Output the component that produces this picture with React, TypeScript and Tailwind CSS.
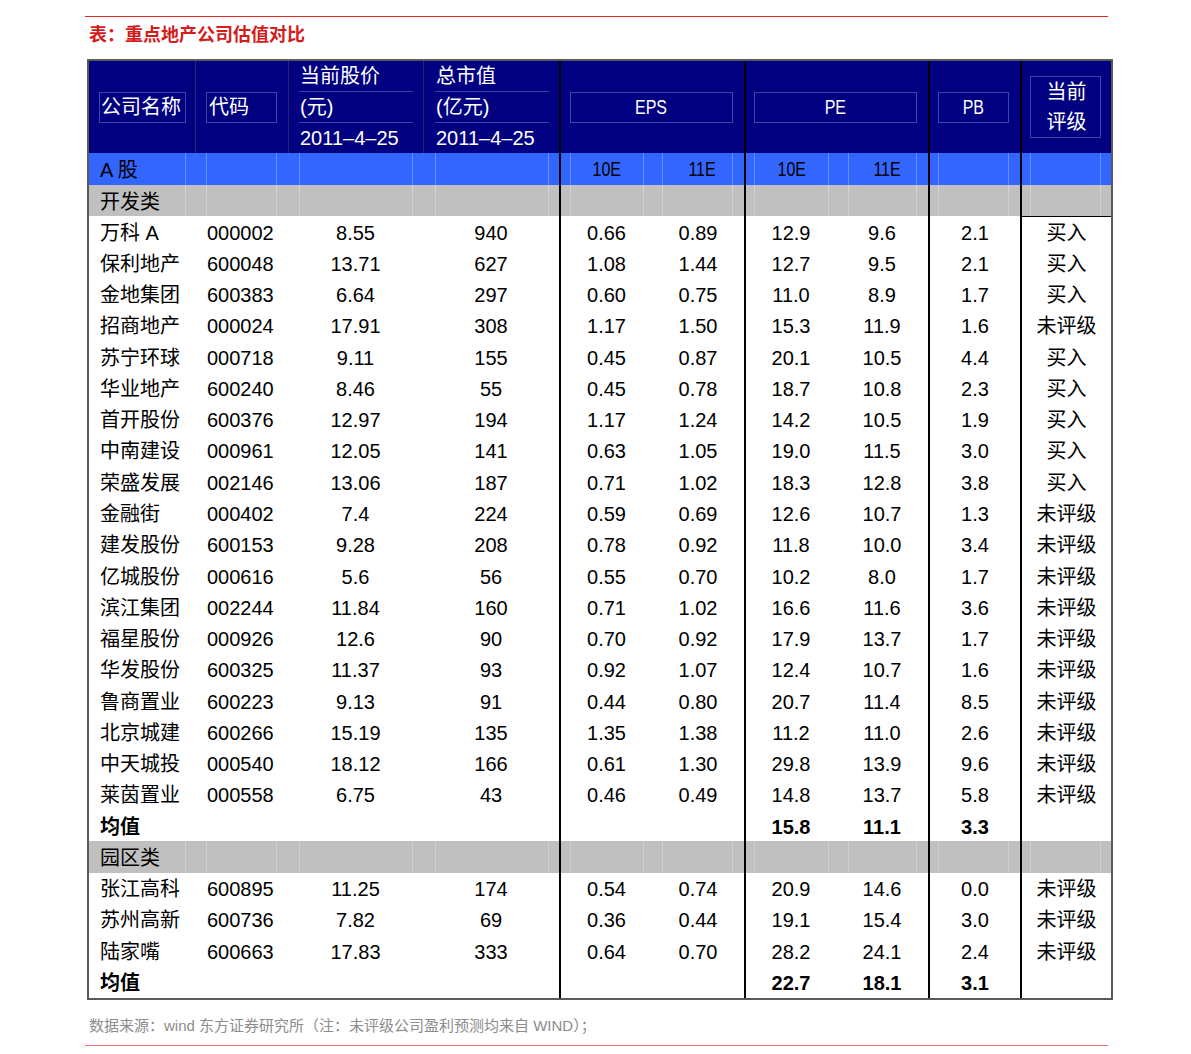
const FONT = "font-['Liberation_Sans','Noto_Sans_CJK_SC',sans-serif]";
const COLS = "grid grid-cols-[106px_93px_135px_136px_93px_92px_92px_92px_92px_91px]";
const ROW_H = "h-[31.28px]";

type Row = string[];

const GROUP1: Row[] = [
  ["万科 A", "000002", "8.55", "940", "0.66", "0.89", "12.9", "9.6", "2.1", "买入"],
  ["保利地产", "600048", "13.71", "627", "1.08", "1.44", "12.7", "9.5", "2.1", "买入"],
  ["金地集团", "600383", "6.64", "297", "0.60", "0.75", "11.0", "8.9", "1.7", "买入"],
  ["招商地产", "000024", "17.91", "308", "1.17", "1.50", "15.3", "11.9", "1.6", "未评级"],
  ["苏宁环球", "000718", "9.11", "155", "0.45", "0.87", "20.1", "10.5", "4.4", "买入"],
  ["华业地产", "600240", "8.46", "55", "0.45", "0.78", "18.7", "10.8", "2.3", "买入"],
  ["首开股份", "600376", "12.97", "194", "1.17", "1.24", "14.2", "10.5", "1.9", "买入"],
  ["中南建设", "000961", "12.05", "141", "0.63", "1.05", "19.0", "11.5", "3.0", "买入"],
  ["荣盛发展", "002146", "13.06", "187", "0.71", "1.02", "18.3", "12.8", "3.8", "买入"],
  ["金融街", "000402", "7.4", "224", "0.59", "0.69", "12.6", "10.7", "1.3", "未评级"],
  ["建发股份", "600153", "9.28", "208", "0.78", "0.92", "11.8", "10.0", "3.4", "未评级"],
  ["亿城股份", "000616", "5.6", "56", "0.55", "0.70", "10.2", "8.0", "1.7", "未评级"],
  ["滨江集团", "002244", "11.84", "160", "0.71", "1.02", "16.6", "11.6", "3.6", "未评级"],
  ["福星股份", "000926", "12.6", "90", "0.70", "0.92", "17.9", "13.7", "1.7", "未评级"],
  ["华发股份", "600325", "11.37", "93", "0.92", "1.07", "12.4", "10.7", "1.6", "未评级"],
  ["鲁商置业", "600223", "9.13", "91", "0.44", "0.80", "20.7", "11.4", "8.5", "未评级"],
  ["北京城建", "600266", "15.19", "135", "1.35", "1.38", "11.2", "11.0", "2.6", "未评级"],
  ["中天城投", "000540", "18.12", "166", "0.61", "1.30", "29.8", "13.9", "9.6", "未评级"],
  ["莱茵置业", "000558", "6.75", "43", "0.46", "0.49", "14.8", "13.7", "5.8", "未评级"],
];

const GROUP2: Row[] = [
  ["张江高科", "600895", "11.25", "174", "0.54", "0.74", "20.9", "14.6", "0.0", "未评级"],
  ["苏州高新", "600736", "7.82", "69", "0.36", "0.44", "19.1", "15.4", "3.0", "未评级"],
  ["陆家嘴", "600663", "17.83", "333", "0.64", "0.70", "28.2", "24.1", "2.4", "未评级"],
];

// which columns carry the heavy black divider on their left
const DIVIDER = [false, false, false, false, true, false, true, false, true, true];

function DataRow({ row, bold, first }: { row: Row; bold?: boolean; first?: boolean }) {
  return (
    <div className={`${COLS} ${ROW_H} text-[20px] text-black ${bold ? "font-bold" : ""}`}>
      {row.map((v, i) => (
        <div
          key={i}
          className={`flex items-center pt-[2px] whitespace-nowrap leading-none ${
            i === 0 ? "pl-[11px]" : i === 1 ? "pl-[12px]" : "justify-center"
          } ${DIVIDER[i] ? "border-l-2 border-black" : ""} ${
            i === 9 && first ? "border-t border-[#8a8a8a]" : ""
          }`}
        >
          {v}
        </div>
      ))}
    </div>
  );
}

function Narrow({ children }: { children: string }) {
  return <span className="inline-block scale-x-[0.8]">{children}</span>;
}

function Band({ bg, label, sub, h }: { bg: string; label: string; sub?: boolean; h: string }) {
  const line = "h-full border-x border-white/25";
  return (
    <div className={`${COLS} ${h} ${bg} text-[20px] text-black leading-none`}>
      <div className="flex items-center pl-[11px] whitespace-nowrap">
        <div className="flex items-center h-full pt-[2px]">{label}</div>
        <div className="ml-auto mr-[9px] h-full border-r border-white/25" />
      </div>
      <div className="flex">
        <div className={`ml-[11px] w-[71px] ${line}`} />
      </div>
      <div className="flex">
        <div className={`ml-[11px] w-[114px] ${line}`} />
      </div>
      <div className="flex">
        <div className={`ml-[12px] w-[114px] ${line}`} />
      </div>
      <div className="col-span-2 flex border-l-2 border-black">
        <div className={`ml-[9px] w-[163px] flex ${line}`}>
          <div className="w-[72px] flex items-center justify-center">{sub && <Narrow>10E</Narrow>}</div>
          <div className="w-[20px] border-x border-white/25" />
          <div className="w-[69px] flex items-center justify-center pl-[10px]">{sub && <Narrow>11E</Narrow>}</div>
        </div>
      </div>
      <div className="col-span-2 flex border-l-2 border-black">
        <div className={`ml-[8px] w-[163px] flex ${line}`}>
          <div className="w-[73px] flex items-center justify-center">{sub && <Narrow>10E</Narrow>}</div>
          <div className="w-[21px] border-x border-white/25" />
          <div className="w-[67px] flex items-center justify-center pl-[9px]">{sub && <Narrow>11E</Narrow>}</div>
        </div>
      </div>
      <div className="flex border-l-2 border-black">
        <div className={`ml-[8px] w-[71px] ${line}`} />
      </div>
      <div className="flex border-l-2 border-black">
        <div className={`ml-[8px] w-[71px] ${line}`} />
      </div>
    </div>
  );
}

function Header() {
  const box = "border border-[#3848a8]";
  const stack = (top: string, mid: string, ml: string) => (
    <div className="flex border-l border-[#26266e]">
      <div className={`${ml} w-[114px] flex flex-col`}>
        <div className="h-[30px] flex items-center pl-[1px]">{top}</div>
        <div className="h-[31px] flex items-center border-t border-[#3848a8] pl-[1px]">{mid}</div>
        <div className="h-[31px] flex items-center border-t border-[#3848a8] pl-[1px]">2011–4–25</div>
      </div>
    </div>
  );
  return (
    <div className={`${COLS} h-[92px] bg-[#000080] text-white text-[20px] leading-none`}>
      <div className="flex items-center">
        <div className={`ml-[10px] w-[87px] h-[31px] flex items-center pl-[1px] whitespace-nowrap ${box}`}>公司名称</div>
      </div>
      <div className="flex items-center border-l border-[#26266e]">
        <div className={`ml-[10px] w-[71px] h-[31px] flex items-center pl-[2px] ${box}`}>代码</div>
      </div>
      {stack("当前股价", "(元)", "ml-[10px]")}
      {stack("总市值", "(亿元)", "ml-[11px]")}
      <div className="col-span-2 flex items-center border-l-2 border-black">
        <div className={`ml-[9px] w-[163px] h-[31px] flex items-center justify-center ${box}`}>
          <Narrow>EPS</Narrow>
        </div>
      </div>
      <div className="col-span-2 flex items-center border-l-2 border-black">
        <div className={`ml-[8px] w-[163px] h-[31px] flex items-center justify-center ${box}`}>
          <Narrow>PE</Narrow>
        </div>
      </div>
      <div className="flex items-center border-l-2 border-black">
        <div className={`ml-[8px] w-[71px] h-[31px] flex items-center justify-center ${box}`}>
          <Narrow>PB</Narrow>
        </div>
      </div>
      <div className="flex items-center border-l-2 border-black">
        <div className={`ml-[8px] w-[71px] h-[62px] flex flex-col items-center justify-center gap-[10px] pl-[2px] ${box}`}>
          <span>当前</span>
          <span>评级</span>
        </div>
      </div>
    </div>
  );
}

export default function App() {
  return (
    <div className={`w-[1191px] h-[1054px] bg-white pt-[16px] ${FONT}`}>
      <div className="ml-[85px] w-[1023px] h-px bg-[#e02a2a]" />
      <div className="ml-[89px] mt-[7px] h-[22px] leading-[22px] text-[18px] font-bold text-[#d41c1c]">
        表：重点地产公司估值对比
      </div>

      <div className="ml-[87px] mt-[13px] w-[1026px] border-2 border-[#5a5a5a]">
        <Header />
        <Band bg="bg-[#3366ff]" label="A 股" sub h="h-[32px]" />
        <Band bg="bg-[#c0c0c0]" label="开发类" h="h-[31px]" />
        {GROUP1.map((r, i) => (
          <DataRow key={r[1]} row={r} first={i === 0} />
        ))}
        <DataRow row={["均值", "", "", "", "", "", "15.8", "11.1", "3.3", ""]} bold />
        <Band bg="bg-[#c0c0c0]" label="园区类" h={ROW_H} />
        {GROUP2.map((r) => (
          <DataRow key={r[1]} row={r} />
        ))}
        <DataRow row={["均值", "", "", "", "", "", "22.7", "18.1", "3.1", ""]} bold />
      </div>

      <div className="ml-[89px] mt-[16px] h-[20px] leading-[20px] text-[15px] text-[#8c8c8c] whitespace-nowrap">
        数据来源：wind 东方证券研究所（注：未评级公司盈利预测均来自 WIND）；
      </div>
      <div className="ml-[85px] mt-[9px] w-[1023px] h-px bg-[#ee7070]" />
    </div>
  );
}
